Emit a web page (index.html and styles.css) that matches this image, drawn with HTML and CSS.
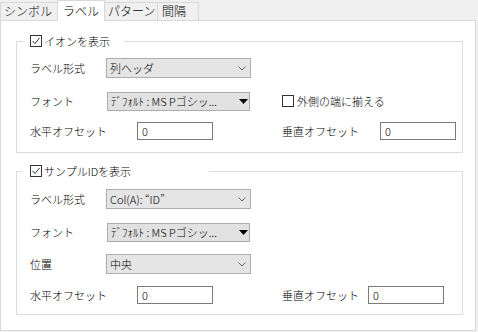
FILE: index.html
```html
<!DOCTYPE html>
<html lang="ja">
<head>
    <meta charset="UTF-8">
    <title>ラベル設定</title>
    <link rel="stylesheet" href="styles.css">
</head>
<body>
    <div class="tabs">
        <div class="tab tab-symbol">シンボル</div>
        <div class="tab tab-label active">ラベル</div>
        <div class="tab tab-pattern">パターン</div>
        <div class="tab tab-gap">間隔</div>
    </div>

    <div class="panel">
        <!-- イオン -->
        <fieldset class="group group-ion">
            <legend class="legend legend-ion">
                <span class="check checked"><svg width="10" height="10" viewBox="0 0 10 10"><polyline points="1.5,5 4,7.5 8.5,2" fill="none" stroke="#333" stroke-width="1"/></svg></span>
                <span>イオンを表示</span>
            </legend>
            <div class="row row-1">
                <span class="lbl">ラベル形式</span>
                <div class="combo">
                    <span class="combo-text">列ヘッダ</span>
                    <svg class="chev" width="8" height="5" viewBox="0 0 8 5"><polyline points="0.5,0.5 4,4 7.5,0.5" fill="none" stroke="#666" stroke-width="1"/></svg>
                </div>
            </div>
            <div class="row row-2">
                <span class="lbl">フォント</span>
                <div class="combo combo-font">
                    <span class="combo-text">ﾃﾞﾌｫﾙﾄ : MS Pゴシッ...</span>
                    <svg class="tri" width="9" height="5" viewBox="0 0 9 5"><polygon points="0,0 9,0 4.5,5" fill="#000"/></svg>
                </div>
                <label class="side-check">
                    <span class="check"></span>
                    <span>外側の端に揃える</span>
                </label>
            </div>
            <div class="row row-3">
                <span class="lbl lbl-wide">水平オフセット</span>
                <div class="field">0</div>
                <span class="lbl lbl-right">垂直オフセット</span>
                <div class="field">0</div>
            </div>
        </fieldset>

        <!-- サンプルID -->
        <fieldset class="group group-sample">
            <legend class="legend legend-sample">
                <span class="check checked"><svg width="10" height="10" viewBox="0 0 10 10"><polyline points="1.5,5 4,7.5 8.5,2" fill="none" stroke="#333" stroke-width="1"/></svg></span>
                <span>サンプルIDを表示</span>
            </legend>
            <div class="row row-s1">
                <span class="lbl">ラベル形式</span>
                <div class="combo">
                    <span class="combo-text">Col(A): “ID”</span>
                    <svg class="chev" width="8" height="5" viewBox="0 0 8 5"><polyline points="0.5,0.5 4,4 7.5,0.5" fill="none" stroke="#666" stroke-width="1"/></svg>
                </div>
            </div>
            <div class="row row-s2">
                <span class="lbl">フォント</span>
                <div class="combo combo-font">
                    <span class="combo-text">ﾃﾞﾌｫﾙﾄ : MS Pゴシッ...</span>
                    <svg class="tri" width="9" height="5" viewBox="0 0 9 5"><polygon points="0,0 9,0 4.5,5" fill="#000"/></svg>
                </div>
            </div>
            <div class="row row-s3">
                <span class="lbl">位置</span>
                <div class="combo">
                    <span class="combo-text">中央</span>
                    <svg class="chev" width="8" height="5" viewBox="0 0 8 5"><polyline points="0.5,0.5 4,4 7.5,0.5" fill="none" stroke="#666" stroke-width="1"/></svg>
                </div>
            </div>
            <div class="row row-s4">
                <span class="lbl lbl-wide">水平オフセット</span>
                <div class="field">0</div>
                <span class="lbl lbl-right2">垂直オフセット</span>
                <div class="field">0</div>
            </div>
        </fieldset>
    </div>
</body>
</html>
```

FILE: styles.css
```css
:root {
    --bg: #f0f0f0;
    --tab-border: #d9d9d9;
    --group-border: #dcdcdc;
    --combo-bg: #e5e5e5;
    --combo-border: #adadad;
    --field-border: #7a7a7a;
}

* {
    box-sizing: border-box;
    margin: 0;
    padding: 0;
}

body {
    font-family: "Noto Sans CJK JP", "Noto Sans", sans-serif;
    font-size: 11px;
    font-weight: 300;
    line-height: 14px;
    color: #000;
    background-color: var(--bg);
    width: 478px;
    height: 332px;
    overflow: hidden;
}

/* tabs */
.tabs {
    display: flex;
    align-items: flex-end;
    height: 20px;
}

.tab {
    height: 18px;
    border: 1px solid var(--tab-border);
    border-bottom: none;
    background-color: var(--bg);
    font-size: 12px;
    line-height: 16px;
    padding-left: 3px;
    margin-left: -1px;
}

.tab-symbol {
    width: 58px;
    margin-left: 0;
}

.tab-label {
    width: 48px;
}

.tab-pattern {
    width: 54px;
}

.tab-gap {
    width: 42px;
    padding-left: 4px;
}

.tab.active {
    height: 21px;
    margin-bottom: -1px;
    background-color: #fff;
    padding-left: 5px;
    line-height: 19px;
    position: relative;
    z-index: 1;
}

/* panel */
.panel {
    width: 476px;
    height: 311px;
    background-color: #fff;
    border: 1px solid var(--tab-border);
}

.group {
    width: 447px;
    margin-left: 15px;
    border: 1px solid var(--group-border);
    padding: 0 0 0 13px;
    min-inline-size: 0;
}

.group-ion {
    margin-top: 12px;
    padding-bottom: 11px;
}

.group-sample {
    margin-top: 10px;
    padding-bottom: 9px;
}

.legend {
    display: flex;
    align-items: center;
    gap: 2px;
    height: 16px;
    margin-left: -7px;
    padding-left: 7px;
}

.legend-ion {
    width: 101px;
}

.legend-sample {
    width: 186px;
}

.check {
    display: flex;
    align-items: center;
    justify-content: center;
    width: 12px;
    height: 12px;
    border: 1px solid #333;
    background-color: #fff;
    flex-shrink: 0;
}

/* rows */
.row {
    display: flex;
    align-items: center;
    height: 20px;
}

.row-1 { margin-top: 9px; }
.row-2 { margin-top: 13px; }
.row-3 { margin-top: 10px; }

.row-s1 { margin-top: 10px; }
.row-s2 { margin-top: 13px; }
.row-s3 { margin-top: 12px; }
.row-s4 { margin-top: 11px; }

.lbl {
    width: 76px;
    flex-shrink: 0;
    white-space: nowrap;
}

.lbl-wide {
    width: 107px;
}

.lbl-right {
    width: 98px;
    margin-left: 69px;
}

.lbl-right2 {
    width: 86px;
    margin-left: 69px;
}

.combo {
    display: flex;
    align-items: center;
    justify-content: space-between;
    width: 145px;
    height: 20px;
    background-color: var(--combo-bg);
    border: 1px solid var(--combo-border);
    padding: 0 4px 0 3px;
}

.combo-font {
    width: 143px;
    height: 19px;
    margin-left: 1px;
    background-color: #e1e1e1;
    padding-right: 1px;
}

.combo-text {
    white-space: nowrap;
}

.side-check {
    display: flex;
    align-items: center;
    gap: 3px;
    margin-left: 32px;
}

.field {
    width: 76px;
    height: 18px;
    border: 1px solid var(--field-border);
    background-color: #fff;
    padding-left: 4px;
    line-height: 16px;
}
```
